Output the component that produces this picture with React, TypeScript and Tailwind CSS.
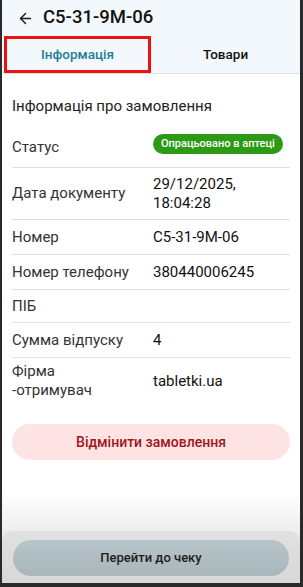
import { ArrowLeft } from "lucide-react";

const rows: { label: string; value?: string; badge?: boolean; h: string }[] = [
  { label: "Статус", value: "Опрацьовано в аптеці", badge: true, h: "h-[40px]" },
  { label: "Дата документу", value: "29/12/2025,\n18:04:28", h: "h-[52px]" },
  { label: "Номер", value: "C5-31-9M-06", h: "h-[35px]" },
  { label: "Номер телефону", value: "380440006245", h: "h-[35px]" },
  { label: "ПІБ", value: "", h: "h-[33px]" },
  { label: "Сумма відпуску", value: "4", h: "h-[35px]" },
];

export default function App() {
  return (
    <div
      className="relative w-[303px] h-[587px] overflow-hidden bg-white border-l-2 border-r-[3px] border-b-[4px] border-[#2a2a2a] flex flex-col"
      style={{ fontFamily: "Roboto, 'Noto Sans', sans-serif" }}
    >
      {/* Header */}
      <div className="bg-[#f3f8fd] border-b border-[#dde3e8]">
        <div className="h-[36px] flex items-center pl-[15px] gap-[9px]">
          <ArrowLeft className="w-[17px] h-[17px] text-[#1a1a1a]" strokeWidth={2} />
          <span className="text-[18.5px] font-medium text-[#111]">C5-31-9M-06</span>
        </div>
        <div className="flex h-[37px]">
          <div className="w-[147px] ml-[2px] border-[3px] border-[#ee1111] flex items-center justify-center">
            <span className="text-[13.5px] font-medium text-[#1f7f94]">Інформація</span>
          </div>
          <div className="flex-1 flex items-center justify-center">
            <span className="text-[13.5px] font-medium text-[#111]">Товари</span>
          </div>
        </div>
      </div>

      {/* Content */}
      <div className="px-[10px] pt-[22px]">
        <div className="text-[15px] text-[#222] leading-[20px]">Інформація про замовлення</div>
        <div className="mt-[12px]">
          {rows.map((r) => (
            <div key={r.label} className={`${r.h} flex items-center border-b border-[#dde2e8]`}>
              <div className="w-[141px] shrink-0 text-[15px] text-[#333]">{r.label}</div>
              {r.badge ? (
                <span className="-mt-[7px] whitespace-nowrap rounded-full bg-[#2c9a14] text-white text-[11px] font-medium px-[8px] h-[20px] flex items-center">
                  {r.value}
                </span>
              ) : (
                <div className="text-[15px] text-[#111] whitespace-pre-line leading-[19px]">{r.value}</div>
              )}
            </div>
          ))}
          <div className="h-[46px] flex items-center">
            <div className="w-[141px] shrink-0 text-[15px] text-[#333] leading-[19px]">
              Фірма
              <br />
              -отримувач
            </div>
            <div className="text-[15px] text-[#111]">tabletki.ua</div>
          </div>
        </div>
        <button className="mt-[20px] w-full h-[36px] rounded-full bg-[#fde3e3] text-[#a0161a] text-[14px] font-medium">
          Відмінити замовлення
        </button>
      </div>

      {/* Bottom */}
      <div className="mt-auto h-[90px] bg-gradient-to-b from-white to-[#d6d6d6] flex flex-col justify-end">
        <div className="h-[52px] bg-[#d9d9d9]/60 rounded-t-[10px] px-[11px] pt-[9px]">
          <button className="w-full h-[36px] rounded-full bg-gradient-to-b from-[#b6c5ca] to-[#a9b6ba] text-[#1c1c1c] text-[13px] font-medium">
            Перейти до чеку
          </button>
        </div>
      </div>
    </div>
  );
}
